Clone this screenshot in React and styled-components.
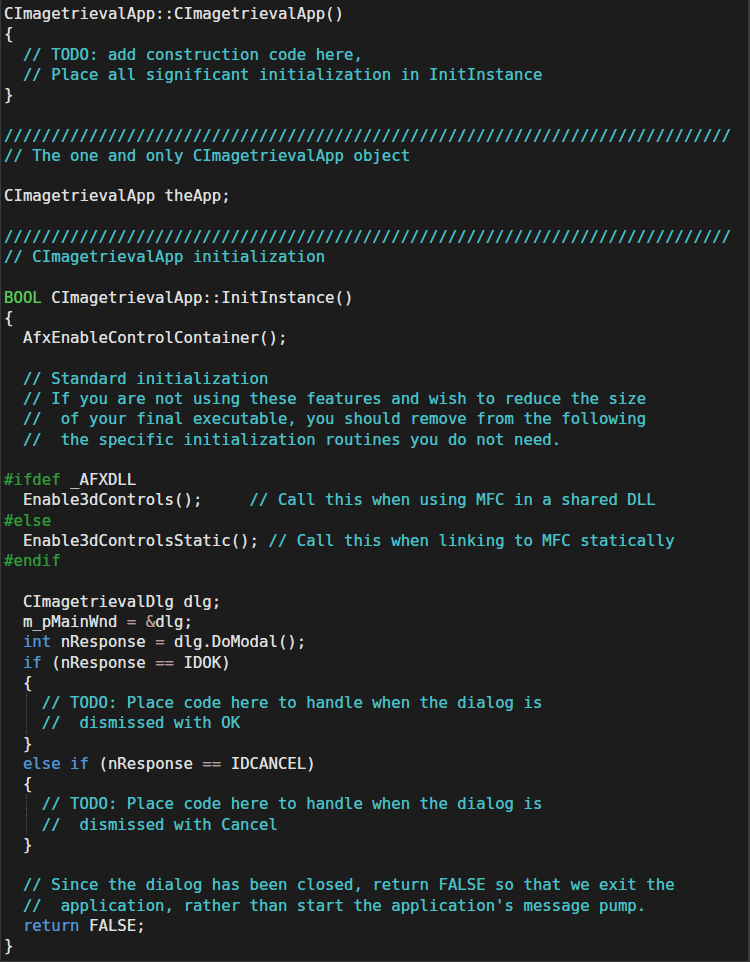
import React from 'react';
import styled, { createGlobalStyle } from 'styled-components';

const GlobalStyle = createGlobalStyle`
	html, body {
		margin: 0;
		padding: 0;
		background: #1c1c1c;
	}
`;

const Editor = styled.div`
	box-sizing: border-box;
	width: 750px;
	height: 962px;
	padding: 4px 0 0 3px;
	background: #1c1c1c;
	border-left: 1px solid #3a3a3a;
	border-right: 2px solid #3a3a3a;
	border-bottom: 1px solid #3a3a3a;
	overflow: hidden;
	font-family: 'DejaVu Sans Mono', 'Liberation Mono', monospace;
	font-size: 15.7px;
	color: #dcdcdc;
	text-shadow: 0 0 0.4px currentColor;
`;

const Line = styled.div`
	height: 20.28px;
	line-height: 20.28px;
	white-space: pre;
	${(props) =>
		props.$guide &&
		`
		background-image: linear-gradient(to bottom, #5a5a5a 50%, transparent 50%);
		background-size: 1px 2px;
		background-repeat: repeat-y;
		background-position: 22px 0;
	`}
`;

const colors = {
	t: '#dedede',
	c: '#48c0c8',
	k: '#5294d8',
	g: '#56c956',
	p: '#2f9a3a',
	o: '#b49a9a',
};

const Tok = styled.span`
	color: ${(props) => colors[props.$kind]};
`;

const SLASHES = '/'.repeat(77);

const lines = [
	[['t', 'CImagetrievalApp::CImagetrievalApp()']],
	[['t', '{']],
	[['t', '  '], ['c', '// TODO: add construction code here,']],
	[['t', '  '], ['c', '// Place all significant initialization in InitInstance']],
	[['t', '}']],
	[],
	[['c', SLASHES]],
	[['c', '// The one and only CImagetrievalApp object']],
	[],
	[['t', 'CImagetrievalApp theApp;']],
	[],
	[['c', SLASHES]],
	[['c', '// CImagetrievalApp initialization']],
	[],
	[['g', 'BOOL'], ['t', ' CImagetrievalApp::InitInstance()']],
	[['t', '{']],
	[['t', '  AfxEnableControlContainer();']],
	[],
	[['t', '  '], ['c', '// Standard initialization']],
	[['t', '  '], ['c', '// If you are not using these features and wish to reduce the size']],
	[['t', '  '], ['c', '//  of your final executable, you should remove from the following']],
	[['t', '  '], ['c', '//  the specific initialization routines you do not need.']],
	[],
	[['p', '#ifdef'], ['t', ' _AFXDLL']],
	[['t', '  Enable3dControls();     '], ['c', '// Call this when using MFC in a shared DLL']],
	[['p', '#else']],
	[['t', '  Enable3dControlsStatic(); '], ['c', '// Call this when linking to MFC statically']],
	[['p', '#endif']],
	[],
	[['t', '  CImagetrievalDlg dlg;']],
	[['t', '  m_pMainWnd '], ['o', '='], ['t', ' '], ['o', '&'], ['t', 'dlg;']],
	[['t', '  '], ['k', 'int'], ['t', ' nResponse '], ['o', '='], ['t', ' dlg.DoModal();']],
	[['t', '  '], ['k', 'if'], ['t', ' (nResponse '], ['o', '=='], ['t', ' IDOK)']],
	[['t', '  {']],
	{ guide: true, toks: [['t', '    '], ['c', '// TODO: Place code here to handle when the dialog is']] },
	{ guide: true, toks: [['t', '    '], ['c', '//  dismissed with OK']] },
	[['t', '  }']],
	[['t', '  '], ['k', 'else if'], ['t', ' (nResponse '], ['o', '=='], ['t', ' IDCANCEL)']],
	[['t', '  {']],
	{ guide: true, toks: [['t', '    '], ['c', '// TODO: Place code here to handle when the dialog is']] },
	{ guide: true, toks: [['t', '    '], ['c', '//  dismissed with Cancel']] },
	[['t', '  }']],
	[],
	[['t', '  '], ['c', '// Since the dialog has been closed, return FALSE so that we exit the']],
	[['t', '  '], ['c', "//  application, rather than start the application's message pump."]],
	[['t', '  '], ['k', 'return'], ['t', ' FALSE;']],
	[['t', '}']],
];

const App = () => {
	return (
		<>
			<GlobalStyle />
			<Editor>
				{lines.map((line, i) => {
					const toks = Array.isArray(line) ? line : line.toks;
					const guide = !Array.isArray(line) && line.guide;
					return (
						<Line key={i} $guide={guide}>
							{toks.length === 0
								? ' '
								: toks.map(([kind, text], j) => (
										<Tok key={j} $kind={kind}>
											{text}
										</Tok>
								  ))}
						</Line>
					);
				})}
			</Editor>
		</>
	);
};

export default App;
